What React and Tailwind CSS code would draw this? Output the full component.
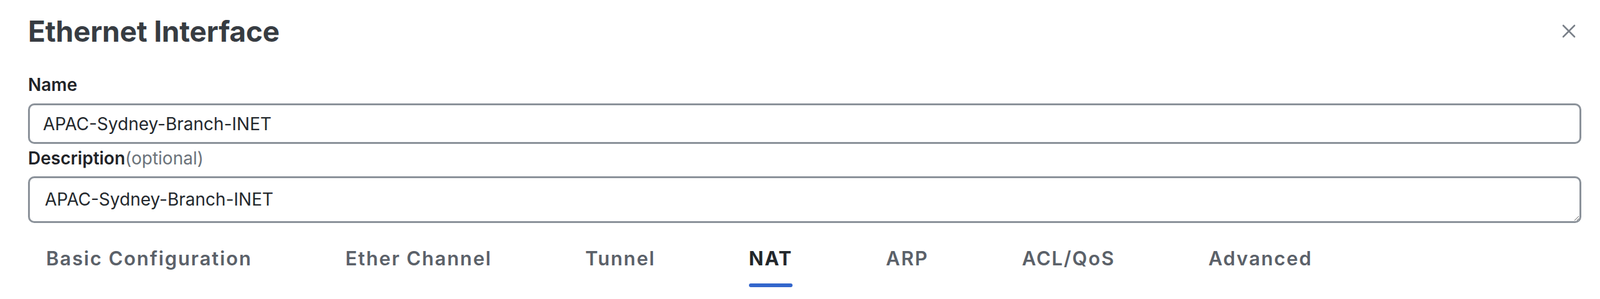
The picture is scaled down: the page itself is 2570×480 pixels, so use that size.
import React, { useState } from 'react'

const TABS = ['Basic Configuration', 'Ether Channel', 'Tunnel', 'NAT', 'ARP', 'ACL/QoS', 'Advanced']

export default function App() {
  const [active, setActive] = useState('NAT')
  const [name, setName] = useState('APAC-Sydney-Branch-INET')
  const [desc, setDesc] = useState('APAC-Sydney-Branch-INET')

  return (
    <div
      className="w-[2570px] h-[480px] bg-white overflow-hidden pl-[45px] pr-[30px] pt-[22px]"
      style={{ fontFamily: 'Inter, "Noto Sans", sans-serif' }}
    >
      {/* Header */}
      <div className="flex items-start justify-between">
        <h1 className="text-[46px] leading-[56px] font-bold text-[#373c42] tracking-[-0.004em]">Ethernet Interface</h1>
        <button className="mt-[16px] mr-[8px] w-[24px] h-[24px] flex items-center justify-center text-[#7a8089]">
          <svg width="22" height="22" viewBox="0 0 22 22" fill="none" stroke="currentColor" strokeWidth="2.6" strokeLinecap="round">
            <path d="M2 2 L20 20 M20 2 L2 20" />
          </svg>
        </button>
      </div>

      {/* Name */}
      <label className="block mt-[42px] text-[28px] leading-[32px] font-semibold text-[#1f2328]">Name</label>
      <input
        value={name}
        onChange={e => setName(e.target.value)}
        className="mt-[14px] block w-full h-[65px] border-[3px] border-[#8b929a] rounded-[10px] px-[21px] text-[28px] text-[#23282d] outline-none"
      />

      {/* Description */}
      <div className="mt-[7px] text-[28px] leading-[32px] text-[#1f2328]">
        <span className="font-semibold">Description</span>
        <span className="text-[#6b727a]">(optional)</span>
      </div>
      <textarea
        value={desc}
        onChange={e => setDesc(e.target.value)}
        className="mt-[13px] block w-full h-[75px] border-[3px] border-[#8b929a] rounded-[10px] px-[24px] py-[17px] text-[28px] leading-[34px] text-[#23282d] outline-none resize-y"
      />

      {/* Tabs */}
      <div className="mt-[37px] pl-[29px] flex gap-[150px]">
        {TABS.map(t => (
          <button
            key={t}
            onClick={() => setActive(t)}
            className={`flex flex-col items-stretch text-[31px] leading-[40px] tracking-[0.06em] ${
              active === t ? 'font-bold text-[#23272b]' : 'font-semibold text-[#5b6169]'
            }`}
          >
            <span>{t}</span>
            <span className={`mt-[20px] h-[6px] rounded-full ${active === t ? 'bg-[#3366cc]' : 'bg-transparent'}`} />
          </button>
        ))}
      </div>
    </div>
  )
}
